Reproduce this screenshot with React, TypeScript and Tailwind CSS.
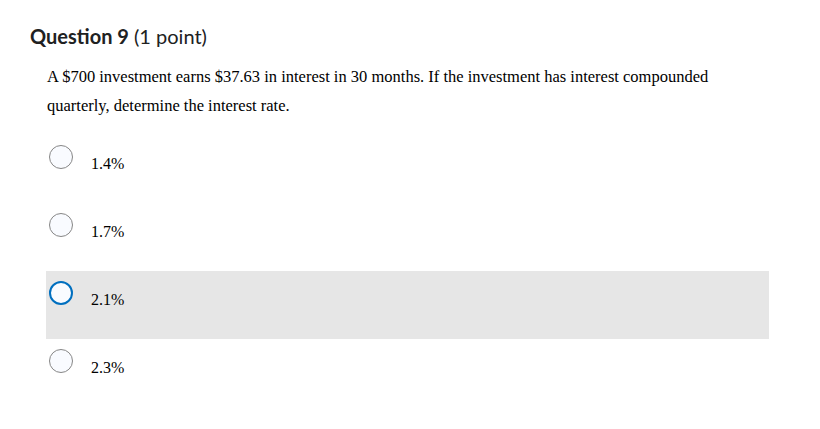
const options = [
  { label: '1.4%', selected: false },
  { label: '1.7%', selected: false },
  { label: '2.1%', selected: true },
  { label: '2.3%', selected: false },
];

function Radio({ selected }: { selected: boolean }) {
  return (
    <span
      className={
        selected
          ? 'block h-6 w-6 shrink-0 rounded-full border-[2.5px] border-[#006fbf] bg-[#f9fbff]'
          : 'block h-6 w-6 shrink-0 rounded-full border border-[#868686] bg-[#f9fbff]'
      }
    />
  );
}

export default function App() {
  return (
    <div className="h-[429px] w-[820px] bg-white pt-[24px] pl-[30px]">
      <h2 className="font-['Lato',sans-serif] text-[20px] leading-[24px] text-[#202122]">
        <span className="font-bold">Question 9</span> (1 point)
      </h2>
      <div className="mt-[14px] pl-[17px] pr-[60px]">
        <p className="font-['Liberation_Serif',serif] text-[16.5px] leading-[29px] text-black">
          A $700 investment earns $37.63 in interest in 30 months. If the investment has interest compounded quarterly, determine the interest rate.
        </p>
      </div>
      <div className="mt-[15px] ml-[16px] w-[723px]">
        {options.map((o) => (
          <label
            key={o.label}
            className={
              'flex h-[68px] items-start pl-[3px] pt-[10px] ' + (o.selected ? 'bg-[#e6e6e6]' : '')
            }
          >
            <Radio selected={o.selected} />
            <span className="ml-[18px] pt-[9px] font-['Liberation_Serif',serif] text-[16px] leading-[20px] text-black">
              {o.label}
            </span>
          </label>
        ))}
      </div>
    </div>
  );
}
